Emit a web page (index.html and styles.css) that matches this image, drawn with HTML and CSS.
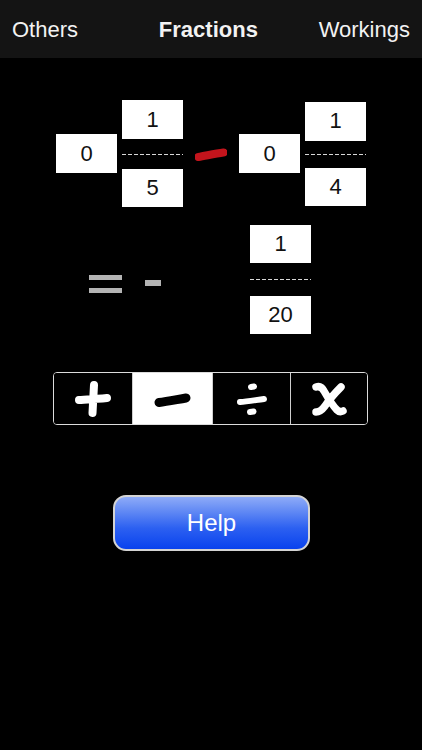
FILE: index.html
```html
<!DOCTYPE html>
<html lang="en">
<head>
<meta charset="utf-8">
<title>Fractions</title>
<link rel="stylesheet" href="styles.css">
</head>
<body>
<header class="nav">
  <span class="nav-item">Others</span>
  <span class="nav-title">Fractions</span>
  <span class="nav-item">Workings</span>
</header>

<main class="calc">
  <section class="equation">
    <div class="box">0</div>
    <div class="frac">
      <div class="box">1</div>
      <div class="frac-line"><div class="dash"></div></div>
      <div class="box box--short">5</div>
    </div>
    <svg class="op-red" width="32" height="14" viewBox="0 0 32 14">
      <path d="M3.5 10 C10 9, 20 6.5, 28.5 5.5" fill="none" stroke="#c3141c" stroke-width="8" stroke-linecap="round"/>
    </svg>
    <div class="box">0</div>
    <div class="frac frac--tight">
      <div class="box">1</div>
      <div class="frac-line"><div class="dash"></div></div>
      <div class="box box--short">4</div>
    </div>
  </section>

  <section class="result">
    <div class="equals"><span></span><span></span></div>
    <div class="sign"></div>
    <div class="frac frac--wide">
      <div class="box box--short">1</div>
      <div class="frac-line"><div class="dash"></div></div>
      <div class="box box--short">20</div>
    </div>
  </section>

  <nav class="segments">
    <button class="seg">
      <svg width="40" height="40" viewBox="0 0 40 40">
        <path d="M21 6 C20.5 14, 20 24, 19.5 34 M6 21 C14 20.5, 24 20, 34 19" fill="none" stroke="#fff" stroke-width="8" stroke-linecap="round"/>
      </svg>
    </button>
    <button class="seg seg--on">
      <svg width="40" height="40" viewBox="0 0 40 40">
        <path d="M6 23.5 C14 22.5, 24 20.5, 33 19" fill="none" stroke="#000" stroke-width="9" stroke-linecap="round"/>
      </svg>
    </button>
    <button class="seg">
      <svg width="40" height="40" viewBox="0 0 40 40">
        <path d="M19 8 L22 7.5" fill="none" stroke="#fff" stroke-width="6" stroke-linecap="round"/>
        <path d="M8 23 C15 22.5, 24 21, 32 20" fill="none" stroke="#fff" stroke-width="6" stroke-linecap="round"/>
        <path d="M18 33 L21.5 32.5" fill="none" stroke="#fff" stroke-width="6" stroke-linecap="round"/>
      </svg>
    </button>
    <button class="seg">
      <svg width="40" height="40" viewBox="0 0 40 40">
        <path d="M7 8 C10 7, 13 8, 15 12 C19 19, 24 27, 28 31 C30 33, 32 33, 34 32 M32 8 C27 13, 20 21, 16 27 C13 31, 10 33, 7 33" fill="none" stroke="#fff" stroke-width="7.5" stroke-linecap="round" stroke-linejoin="round"/>
      </svg>
    </button>
  </nav>

  <button class="help">Help</button>
</main>
</body>
</html>
```

FILE: styles.css
```css
* {
  box-sizing: border-box;
}

html, body {
  margin: 0;
  padding: 0;
  background: #000;
}

body {
  width: 422px;
  height: 750px;
  font-family: "Liberation Sans", Arial, sans-serif;
  color: #fff;
  overflow: hidden;
}

/* top navigation bar */
.nav {
  height: 58px;
  background: #141414;
  display: flex;
  align-items: center;
  justify-content: space-between;
  padding: 2px 12px 0 12px;
  font-size: 22px;
  color: #f2f2f2;
}

.nav-title {
  font-weight: bold;
  margin-left: 20px;
}

.calc {
  display: flex;
  flex-direction: column;
}

/* shared number boxes */
.box {
  width: 61px;
  height: 39px;
  background: #fff;
  color: #111;
  font-size: 22px;
  display: flex;
  align-items: center;
  justify-content: center;
}

.box--short {
  height: 38px;
}

.frac {
  display: flex;
  flex-direction: column;
  width: 61px;
}

.frac-line {
  height: 30px;
  display: flex;
  align-items: center;
}

.frac--tight .frac-line {
  height: 27px;
}

.frac--wide .frac-line {
  height: 33px;
}

.dash {
  width: 100%;
  height: 1px;
  background: repeating-linear-gradient(to right, #d8d8d8 0 4px, transparent 4px 6px);
}

/* first line: the two mixed fractions */
.equation {
  margin-top: 42px;
  margin-left: 56px;
  display: flex;
  align-items: center;
}

.equation > .box {
  margin-right: 5px;
}

.op-red {
  margin: 0 12px;
}

/* second line: the answer */
.result {
  margin-top: 18px;
  margin-left: 89px;
  display: flex;
  align-items: flex-start;
}

.equals {
  width: 33px;
  margin-top: 50px;
  display: flex;
  flex-direction: column;
  gap: 8px;
}

.equals span {
  display: block;
  height: 5px;
  background: #b4b4b4;
}

.sign {
  width: 16px;
  height: 6px;
  background: #b4b4b4;
  margin-top: 55px;
  margin-left: 23px;
  margin-right: 89px;
}

/* operator picker */
.segments {
  margin-top: 38px;
  margin-left: 53px;
  width: 315px;
  height: 53px;
  border: 1px solid #dcdcdc;
  border-radius: 4px;
  overflow: hidden;
  display: grid;
  grid-template-columns: 78px 80px 78px 1fr;
}

.seg {
  border: 0;
  border-left: 1px solid #cfcfcf;
  background: #000;
  padding: 0;
  display: flex;
  align-items: center;
  justify-content: center;
}

.seg:first-child {
  border-left: 0;
}

.seg--on {
  background: #fff;
}

/* help button */
.help {
  margin-top: 70px;
  margin-left: 113px;
  width: 197px;
  height: 56px;
  border: 2px solid #d4d4d4;
  border-radius: 13px;
  background: linear-gradient(to bottom, #8eabf8 0%, #5d86f4 30%, #2c60f1 60%, #0942ee 100%);
  color: #fff;
  font-family: "Liberation Sans", Arial, sans-serif;
  font-size: 24px;
  padding: 0;
}
```
